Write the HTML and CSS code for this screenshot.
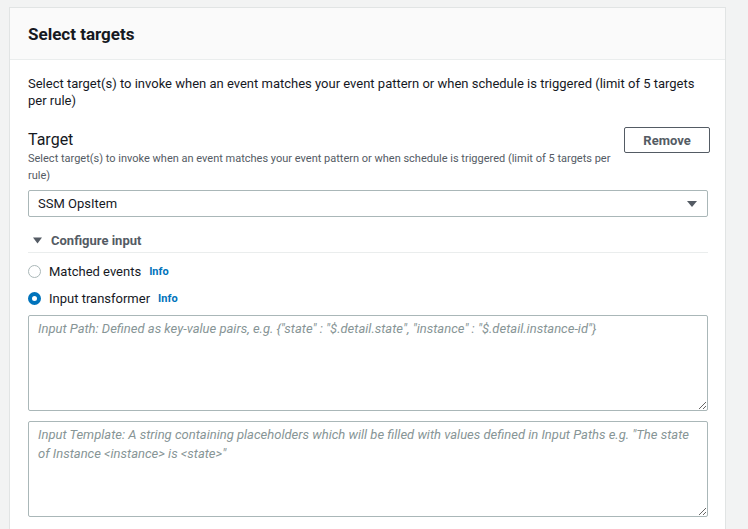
FILE: index.html
```html
<!DOCTYPE html>
<html lang="en">
<head>
  <meta charset="UTF-8" />
  <title>Select targets</title>
  <link rel="stylesheet" href="styles.css">
</head>
<body>
  <div class="card">
    <div class="card-header">
      <h2>Select targets</h2>
    </div>

    <div class="card-body">
      <p class="intro">Select target(s) to invoke when an event matches your event pattern or when schedule is triggered (limit of 5 targets per rule)</p>

      <div class="target-head">
        <div class="target-text">
          <h3>Target</h3>
          <p class="hint">Select target(s) to invoke when an event matches your event pattern or when schedule is triggered (limit of 5 targets per rule)</p>
        </div>
        <button class="btn">Remove</button>
      </div>

      <div class="select">
        <span>SSM OpsItem</span>
        <svg width="10" height="8" viewBox="0 0 10 8"><path d="M0 1h10L5 7z" fill="#545b64"/></svg>
      </div>

      <div class="expander">
        <svg width="9" height="7" viewBox="0 0 9 7"><path d="M0 0.5h9L4.5 6.5z" fill="#545b64"/></svg>
        <span>Configure input</span>
      </div>

      <div class="radios">
        <label class="radio">
          <span class="dot"></span>
          <span class="label">Matched events</span>
          <a class="info">Info</a>
        </label>
        <label class="radio">
          <span class="dot checked"></span>
          <span class="label">Input transformer</span>
          <a class="info">Info</a>
        </label>
      </div>

      <textarea class="field" placeholder='Input Path: Defined as key-value pairs, e.g. {"state" : "$.detail.state", "instance" : "$.detail.instance-id"}'></textarea>
      <textarea class="field" placeholder='Input Template: A string containing placeholders which will be filled with values defined in Input Paths e.g. "The state of Instance <instance> is <state>"'></textarea>
    </div>
  </div>
</body>
</html>
```

FILE: styles.css
```css
* {
  margin: 0;
  padding: 0;
  box-sizing: border-box;
}

body {
  background: #f2f3f3;
  font-family: Roboto, "Liberation Sans", sans-serif;
  color: #16191f;
  padding: 7px 0 0 9px;
  overflow: hidden;
}

.card {
  width: 717px;
  background: #fff;
  border: 1px solid #e1e4e4;
  border-bottom: none;
}

.card-header {
  background: #fafafa;
  border-bottom: 1px solid #eaeded;
  height: 52px;
  padding: 0 18px;
  display: flex;
  align-items: center;
}

.card-header h2 {
  font-size: 17px;
  font-weight: 700;
}

.card-body {
  padding: 15px 17px 20px 18px;
}

.intro {
  font-size: 13px;
  line-height: 17px;
  margin-bottom: 18px;
}

.target-head {
  display: flex;
  justify-content: space-between;
  align-items: flex-start;
}

.target-text {
  width: 588px;
}

.target-text h3 {
  font-size: 16px;
  font-weight: 400;
  line-height: 21px;
  padding-top: 2px;
}

.hint {
  font-size: 11px;
  line-height: 17px;
  color: #545b64;
}

.btn {
  width: 86px;
  height: 26px;
  margin-right: -2px;
  background: #fff;
  border: 1px solid #545b64;
  border-radius: 2px;
  font-family: inherit;
  font-size: 13px;
  font-weight: 700;
  color: #545b64;
}

.select {
  margin-top: 6px;
  height: 27px;
  border: 1px solid #aab7b8;
  border-radius: 2px;
  display: flex;
  align-items: center;
  justify-content: space-between;
  padding: 0 10px 0 9px;
  font-size: 13px;
}

.expander {
  margin-top: 13px;
  height: 23px;
  border-bottom: 1px solid #eaeded;
  display: flex;
  align-items: center;
  padding-left: 5px;
  padding-bottom: 1px;
  gap: 9px;
  font-size: 13px;
  font-weight: 700;
  color: #545b64;
}

.radios {
  margin-top: 5px;
}

.radio {
  height: 27px;
  display: flex;
  align-items: center;
  font-size: 13px;
}

.dot {
  width: 13px;
  height: 13px;
  border-radius: 50%;
  border: 1px solid #aab7b8;
  margin-right: 8px;
}

.dot.checked {
  border: 4px solid #0073bb;
}

.info {
  margin-left: 8px;
  font-size: 11px;
  font-weight: 700;
  color: #0073bb;
}

.field {
  display: block;
  width: 100%;
  height: 96px;
  margin-top: 3px;
  border: 1px solid #aab7b8;
  border-radius: 2px;
  padding: 3px 9px;
  font-family: inherit;
  font-size: 13px;
  line-height: 19px;
  resize: vertical;
}

.field + .field {
  margin-top: 10px;
}

.field::placeholder {
  color: #879596;
  font-style: italic;
}
```
